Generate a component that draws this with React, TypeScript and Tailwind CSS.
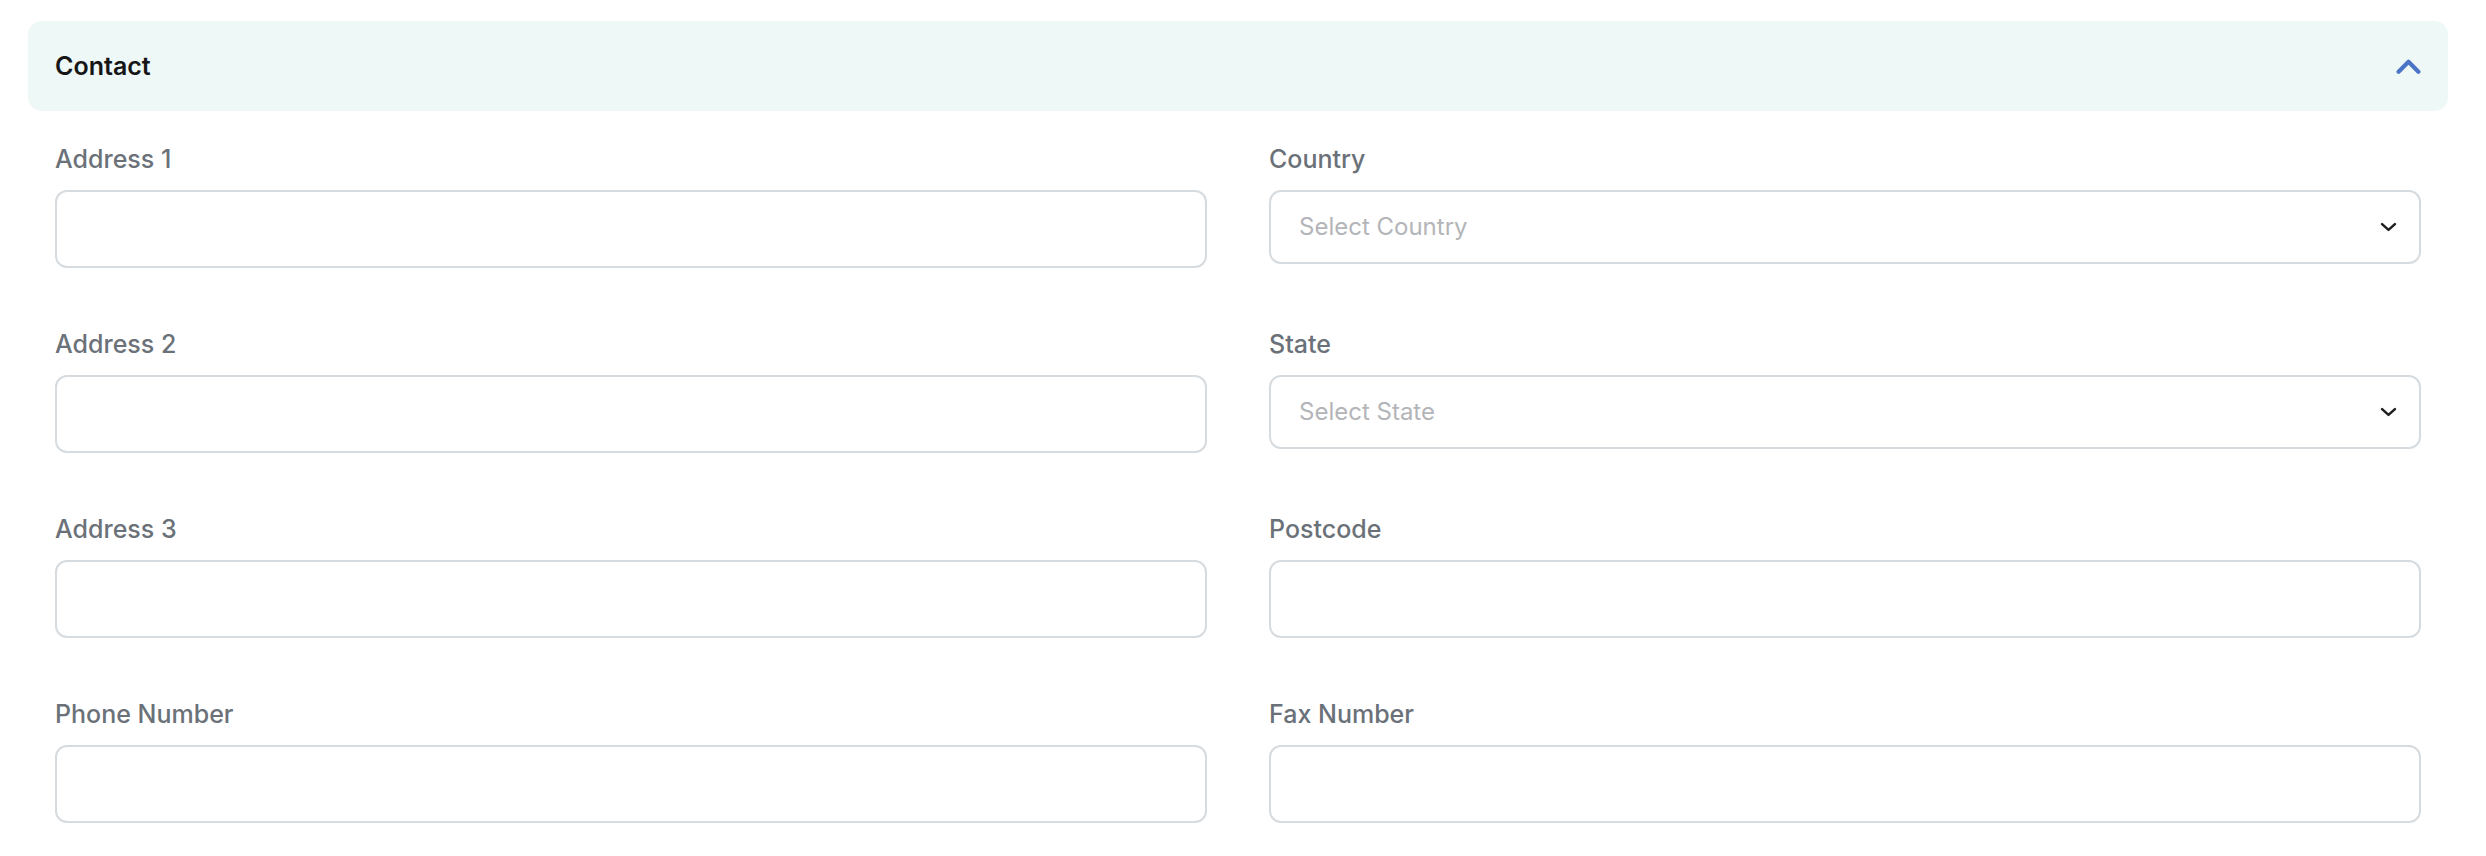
import React from 'react'

const font = { fontFamily: 'Inter, "Noto Sans", sans-serif' }

function Chevron({ up = false, className = '' }: { up?: boolean; className?: string }) {
  return (
    <svg
      viewBox="0 0 24 14"
      className={className}
      fill="none"
      stroke="currentColor"
      strokeLinecap="round"
      strokeLinejoin="round"
    >
      {up ? <polyline points="2.5,12 12,2.5 21.5,12" strokeWidth="4" /> : <polyline points="3,3 12,11 21,3" strokeWidth="3.5" />}
    </svg>
  )
}

function TextField({ label }: { label: string }) {
  return (
    <div className="flex flex-col">
      <label className="text-[25px] leading-[36px] font-medium text-[#6b7178]">{label}</label>
      <input
        type="text"
        className="mt-[13px] h-[78px] w-full rounded-[12px] border-2 border-[#d6dbdf] bg-white px-[24px] text-[24px] outline-none"
      />
    </div>
  )
}

function SelectField({ label, placeholder }: { label: string; placeholder: string }) {
  return (
    <div className="flex flex-col">
      <label className="text-[25px] leading-[36px] font-medium text-[#6b7178]">{label}</label>
      <button
        type="button"
        className="mt-[13px] flex h-[74px] w-full items-center justify-between rounded-[12px] border-2 border-[#d6dbdf] bg-white pl-[28px] pr-[21px] text-left"
      >
        <span className="text-[24px] text-[#b3b5b8]">{placeholder}</span>
        <Chevron className="h-[10px] w-[19px] text-[#1f1f1f]" />
      </button>
    </div>
  )
}

export default function App() {
  return (
    <div className="min-h-screen bg-white pl-[28px] pr-[38px] pt-[21px]" style={font}>
      {/* Section header */}
      <div className="flex h-[90px] items-center justify-between rounded-[14px] bg-[#eef8f6] px-[27px]">
        <h2 className="pt-[2px] text-[25px] font-semibold text-[#161616]">Contact</h2>
        <Chevron up className="h-[15px] w-[25px] text-[#4a74c6]" />
      </div>

      {/* Form grid */}
      <div className="mt-[30px] grid grid-cols-2 gap-x-[62px] gap-y-[58px] px-[27px]">
        <TextField label="Address 1" />
        <SelectField label="Country" placeholder="Select Country" />
        <TextField label="Address 2" />
        <SelectField label="State" placeholder="Select State" />
        <TextField label="Address 3" />
        <TextField label="Postcode" />
        <TextField label="Phone Number" />
        <TextField label="Fax Number" />
      </div>
    </div>
  )
}
